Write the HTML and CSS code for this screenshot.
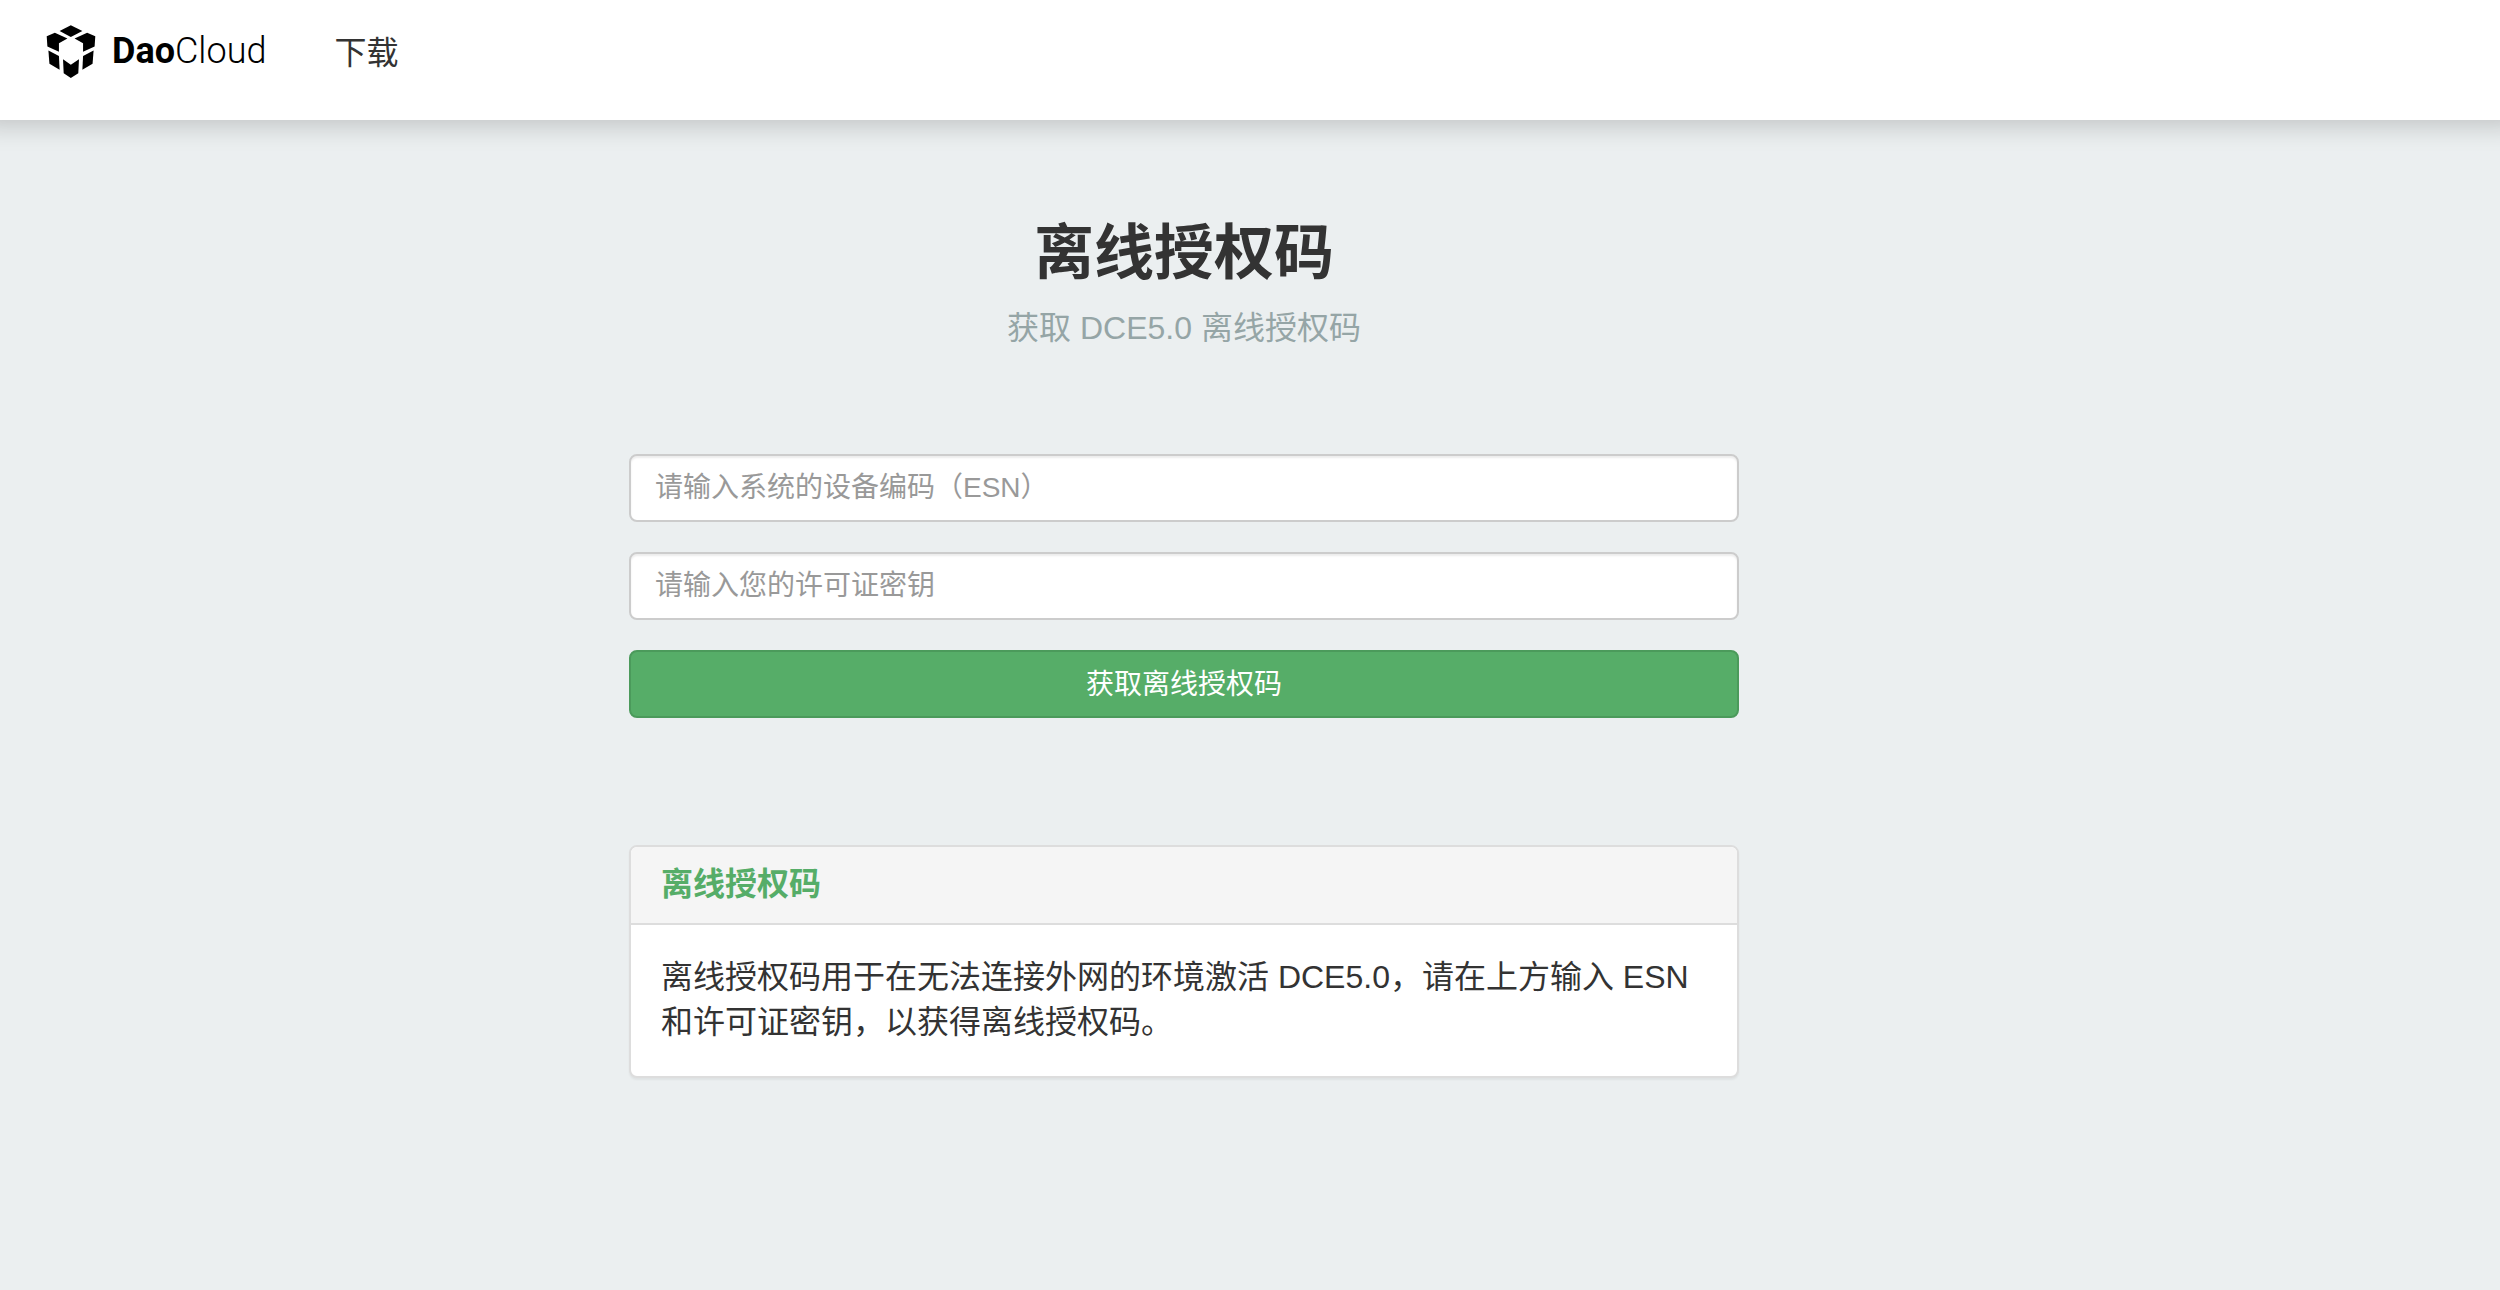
FILE: index.html
```html
<!DOCTYPE html>
<html lang="zh-CN">
<head>
    <meta charset="UTF-8">
    <meta name="viewport" content="width=device-width, initial-scale=1.0">
    <title>离线授权码</title>
    <link rel="stylesheet" href="styles.css">
</head>
<body>
    <header class="navbar">
        <a class="brand" href="#">
            <svg class="brand-icon" viewBox="50 46 147 156" aria-hidden="true">
                <polygon points="90,64 123,47 157,64 123,81"/>
                <polygon points="52,79 76,69 113,86 88,100 88,125 54,109"/>
                <polygon points="195,79 171,69 134,86 159,100 159,125 193,109"/>
                <polygon points="57,121 88,137 90,178 60,160"/>
                <polygon points="190,121 159,137 157,178 187,160"/>
                <polygon points="100,147 123,163 147,147 145,188 123,202 102,188"/>
            </svg>
            <span class="brand-name"><b>Dao</b>Cloud</span>
        </a>
        <nav>
            <a class="nav-link" href="#">下载</a>
        </nav>
    </header>

    <main class="container">
        <div class="page-title">
            <h1>离线授权码</h1>
            <p>获取 DCE5.0 离线授权码</p>
        </div>

        <form class="license-form">
            <input class="form-control" type="text" name="esn" aria-label="设备编码" placeholder="请输入系统的设备编码（ESN）">
            <input class="form-control" type="text" name="license" aria-label="许可证密钥" placeholder="请输入您的许可证密钥">
            <button class="btn" type="submit">获取离线授权码</button>
        </form>

        <section class="panel">
            <h2 class="panel-heading">离线授权码</h2>
            <p class="panel-body">离线授权码用于在无法连接外网的环境激活 DCE5.0，请在上方输入 ESN 和许可证密钥，以获得离线授权码。</p>
        </section>
    </main>
</body>
</html>
```
FILE: styles.css
```css
* {
    box-sizing: border-box;
}
body {
    margin: 0;
    background-color: #ebeff0;
    color: #333;
    font-family: "Liberation Sans", "Noto Sans CJK SC", sans-serif;
    font-size: 32px;
    line-height: 45px;
}
h1, h2, p {
    margin: 0;
}

/* Top bar */
.navbar {
    display: flex;
    align-items: flex-start;
    gap: 68px;
    height: 120px;
    padding: 25px 46px;
    background-color: #fff;
    box-shadow: 0 -14px 24px 20px rgba(0, 0, 0, 0.18);
}
.brand {
    display: flex;
    align-items: center;
    gap: 16px;
    color: #000;
    text-decoration: none;
}
.brand-icon {
    width: 50px;
    height: 53px;
}
.brand-name {
    font-family: Roboto, sans-serif;
    font-size: 36px;
    font-weight: 300;
}
.brand-name b {
    font-weight: 700;
}
.nav-link {
    display: block;
    padding-top: 6px;
    color: #333;
    text-decoration: none;
}

/* Content column */
.container {
    padding: 92px 132px 90px 0;
}
.page-title {
    text-align: center;
}
.page-title h1 {
    font-size: 60px;
    line-height: 84px;
}
.page-title p {
    padding-top: 10px;
    color: #95a5a6;
}
.license-form, .panel {
    width: 100%;
    max-width: 1110px;
    margin: 0 auto;
}
.license-form {
    display: flex;
    flex-direction: column;
    gap: 30px;
    margin-top: 103px;
}
.form-control, .btn {
    width: 100%;
    height: 68px;
    padding: 12px 24px;
    border: 2px solid #ccc;
    border-radius: 8px;
    font-family: inherit;
    font-size: 28px;
}
.form-control {
    background-color: #fff;
    color: #555;
    box-shadow: inset 0 2px 2px rgba(0, 0, 0, 0.075);
}
.form-control::placeholder {
    color: #999;
}
.btn {
    padding: 10px 24px 14px;
    border-color: #4b9a5b;
    background-color: #56ad68;
    color: #fff;
    cursor: pointer;
}
.btn:hover {
    background-color: #4b9a5b;
}

/* Info panel */
.panel {
    margin-top: 127px;
    border: 2px solid #ddd;
    border-radius: 8px;
    background-color: #fff;
    box-shadow: 0 2px 2px rgba(0, 0, 0, 0.05);
}
.panel-heading {
    padding: 19px 30px 21px;
    border-bottom: 2px solid #ddd;
    border-radius: 6px 6px 0 0;
    background-color: #f5f5f5;
    color: #56ad68;
    font-size: 32px;
    line-height: 36px;
}
.panel-body {
    padding: 30px 30px 31px;
}
```
